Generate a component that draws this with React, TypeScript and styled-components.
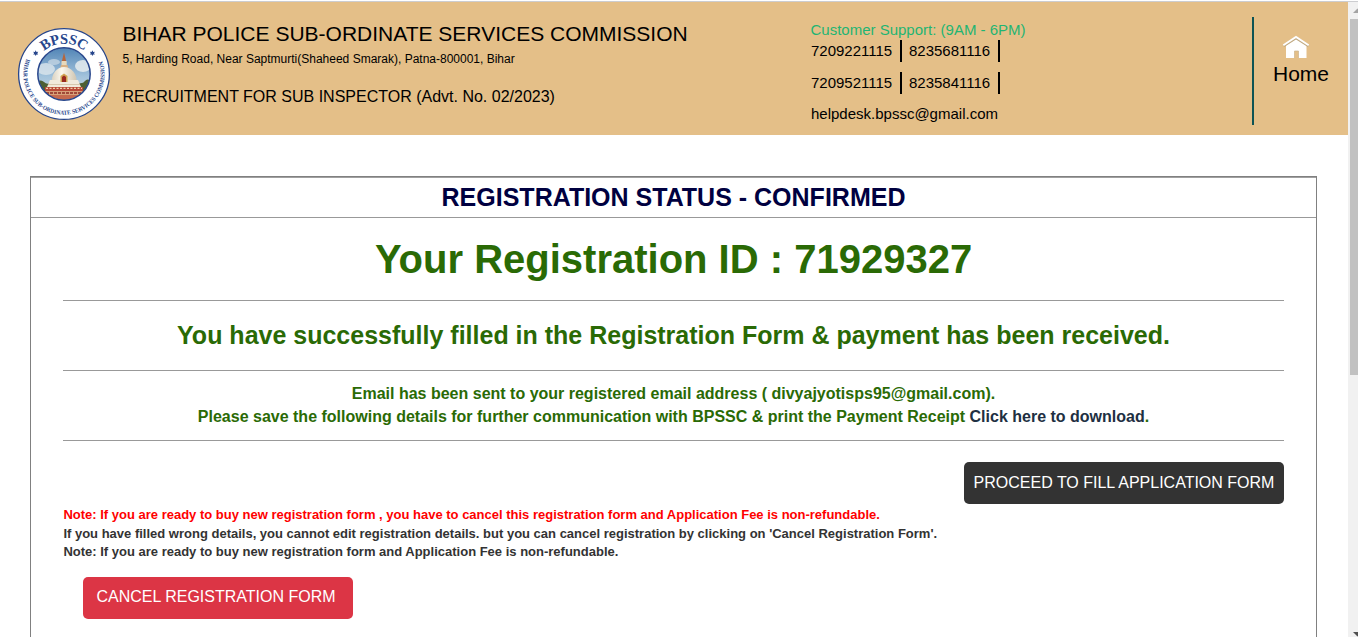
import React from 'react';
import styled, { createGlobalStyle } from 'styled-components';

const GlobalStyle = createGlobalStyle`
  * { box-sizing: border-box; }
  body {
    margin: 0;
    overflow: hidden;
    background: #fff;
    font-family: "Liberation Sans", Arial, sans-serif;
  }
`;

const Window = styled.div`
  display: flex;
  width: 1358px;
  height: 637px;
  overflow: hidden;
`;

const TopEdge = styled.div`
  height: 2px;
  flex: none;
  border-bottom: 1px solid #cccdd0;
  background: #fff;
`;

const Shell = styled.div`
  display: flex;
  flex-direction: column;
  width: 1358px;
  height: 637px;
  overflow: hidden;
`;

const Page = styled.div`
  width: 1348px;
  flex: none;
`;

const Header = styled.header`
  display: flex;
  height: 133px;
  background: #e4bf88;
  color: #000;
`;

const LogoBox = styled.div`
  width: 122.5px;
  padding: 25px 0 0 17px;
`;

const TitleBlock = styled.div`
  width: 688px;
  padding-top: 20px;
`;

const Line = styled.div<{ $size: number; $height: number; $gap?: number }>`
  font-size: ${p => p.$size}px;
  line-height: ${p => p.$height}px;
  margin-top: ${p => p.$gap ?? 0}px;
  white-space: nowrap;
`;

const Support = styled.div`
  width: 441.5px;
  padding-top: 19px;
`;

const SupportHeading = styled(Line)`
  color: #1fb573;
`;

const PhoneRow = styled.div<{ $gap: number }>`
  display: flex;
  gap: 7px;
  margin-top: ${p => p.$gap}px;
  padding-left: 0.5px;
`;

const Phone = styled.span`
  width: 91px;
  height: 22px;
  padding-top: 2px;
  border-right: 2px solid #000;
  font-size: 15px;
  line-height: 17px;
`;

const Email = styled(Line)`
  padding-left: 0.5px;
`;

const HomeLink = styled.a`
  display: flex;
  flex-direction: column;
  align-items: center;
  width: 96px;
  height: 108px;
  margin-top: 15px;
  padding-top: 18px;
  border-left: 2px solid #0d5354;
  font-size: 21px;
  line-height: 23px;

  svg { display: block; margin: 0 10px 4px 0; }
`;

const Panel = styled.main`
  width: 1287px;
  height: 480px;
  margin: 41px 0 0 30px;
  border: 1px solid #808080;
`;

const PanelTitle = styled.h1`
  height: 41px;
  margin: 0;
  padding-top: 5px;
  border-top: 1px solid #a0a0a0;
  border-bottom: 1px solid #999;
  color: #000040;
  font-size: 25px;
  line-height: 29px;
  text-align: center;
`;

const PanelBody = styled.div`
  padding: 0 32px;
`;

const Section = styled.section<{ $height: number; $top: number; $size: number; $line: number }>`
  height: ${p => p.$height}px;
  padding-top: ${p => p.$top}px;
  border-bottom: 1px solid #999;
  color: #2a6a05;
  font-size: ${p => p.$size}px;
  font-weight: 700;
  line-height: ${p => p.$line}px;
  text-align: center;
  white-space: nowrap;
`;

const DownloadLink = styled.a`
  color: #212f42;
`;

const Actions = styled.div`
  display: flex;
  justify-content: flex-end;
  padding-top: 21px;
`;

const Button = styled.button<{ $danger?: boolean }>`
  display: block;
  width: ${p => (p.$danger ? 270 : 320)}px;
  height: 42px;
  margin: ${p => (p.$danger ? '17px 0 0 20px' : '0')};
  padding: ${p => (p.$danger ? '0 4px 3px 0' : '0 0 1px')};
  border: 0;
  border-radius: 5px;
  background: ${p => (p.$danger ? '#dc3545' : '#333')};
  color: #fff;
  font: 16px/18px "Liberation Sans", Arial, sans-serif;
  text-align: center;
  white-space: nowrap;
`;

const Notes = styled.div`
  padding: 3px 0 0 0.4px;
  color: #333;
  font-size: 13px;
  font-weight: 700;
  white-space: nowrap;
`;

const Note = styled.p<{ $alert?: boolean; $height?: number }>`
  margin: 0;
  color: ${p => (p.$alert ? '#f00' : 'inherit')};
  line-height: 15px;
  height: ${p => p.$height ?? 18}px;
`;

const NoteList = styled.div`
  padding-top: 1px;
`;

const Scrollbar = styled.div`
  display: flex;
  flex-direction: column;
  flex: none;
  width: 10px;
  height: 635px;
  background: #f1f1f1;
  overflow: hidden;

  svg { display: block; flex: none; }
`;

const Thumb = styled.div`
  width: 8px;
  height: 356px;
  margin: 0 0 auto 2px;
  background: #c1c1c1;
`;

const Emblem = () => (
  <svg width="94" height="94" viewBox="17 27 94 94" style={{ display: 'block' }}>
    <defs>
      <clipPath id="scene"><circle cx="64" cy="74" r="26" /></clipPath>
      <linearGradient id="sky" x1="0" y1="0" x2="0" y2="1">
        <stop offset="0" stopColor="#4f83b5" />
        <stop offset="0.55" stopColor="#a3c3dc" />
        <stop offset="1" stopColor="#d5dfe4" />
      </linearGradient>
      <linearGradient id="dome" x1="0" y1="0" x2="1" y2="0">
        <stop offset="0" stopColor="#d9d1c0" />
        <stop offset="0.4" stopColor="#fbf8ee" />
        <stop offset="1" stopColor="#cfc4b0" />
      </linearGradient>
      <path id="topArc" d="M33.5 74 A30.5 30.5 0 0 1 94.5 74" />
      <path id="lowArc" d="M26.4 58.8 A40.6 40.6 0 1 0 101.6 58.8" />
    </defs>
    <circle cx="64" cy="74" r="45.4" fill="#fff" stroke="#27468c" strokeWidth="1.3" />
    <g clipPath="url(#scene)">
      <rect x="37" y="47" width="54" height="54" fill="url(#sky)" />
      <ellipse cx="46" cy="69" rx="9" ry="6" fill="#dce6ec" opacity="0.8" />
      <ellipse cx="54" cy="62" rx="6" ry="3" fill="#c3d5e2" opacity="0.8" />
      <ellipse cx="83" cy="66" rx="8" ry="6" fill="#e6ecef" opacity="0.85" />
      <path d="M37 82q4-3 7 0t6 1v9H37zM91 81q-4-3-6 0t-7 2v9h13z" fill="#4d5f34" />
      <path d="M64 52.5l1 4 1.3 5.5h-4.6l1.3-5.5z" fill="#b5663c" />
      <path d="M61.5 61h5.2v4.5h-5.2z" fill="#e8d9bb" />
      <path d="M61 65h6.5l.8 3h-8z" fill="#d9b184" />
      <path d="M52 84C50.500 74 57 67 64 67S78 74 76.500 84z" fill="url(#dome)" />
      <path d="M50 80h28l3 7H47z" fill="#f1eadb" />
      <path d="M48 84.500h32" stroke="#cdb999" strokeWidth="0.700" />
      <path d="M60.500 82v-6l3.500-2.500 3.500 2.500v6z" fill="#d1a451" />
      <path d="M62 82v-5l2-1.500 2 1.500v5z" fill="#9a2a20" />
      <path d="M45 87h38v4H45z" fill="#b94a38" />
      <path d="M46 88.300h36" stroke="#efd0a8" strokeWidth="1.200" strokeDasharray="2 1.500" />
      <path d="M41 91h46v4H41z" fill="#d8a078" />
      <path d="M42 93h44" stroke="#8d2e25" strokeWidth="1.400" strokeDasharray="3 1" />
      <path d="M41 95h46v6H41z" fill="#c46a4e" />
    </g>
    <circle cx="64" cy="74" r="26.200" fill="none" stroke="#27468c" strokeWidth="1.500" />
    <g fill="#27468c" fontFamily="Liberation Serif, serif" fontWeight="700">
      <text fontSize="14.500" letterSpacing="-0.300" textAnchor="middle">
        <textPath href="#topArc" startOffset="50%">BPSSC</textPath>
      </text>
      <text fontSize="6" textLength="156" lengthAdjust="spacingAndGlyphs">
        <textPath href="#lowArc" textLength="156" lengthAdjust="spacingAndGlyphs">BIHAR POLICE SUB-ORDINATE SERVICES COMMISSION</textPath>
      </text>
    </g>
    {[35.7, 92.4].map(x => (
      <path key={x} transform={`translate(${x} 53.200)`} fill="#27468c"
        d="M0-2.900L.8-1.300 2.500-1.400 1.600 0 2.500 1.400.8 1.300 0 2.900-.8 1.300-2.500 1.400-1.600 0-2.500-1.400-.8-1.300z" />
    ))}
  </svg>
);

const House = () => (
  <svg width="28" height="23" viewBox="0 0 28 23">
    <path d="M4 10.500L14 4l10.500 6.500V23H16.500v-7h-4v7H4z" fill="#fff" />
    <path d="M16.500 23v-7h-4v7" fill="none" stroke="#cbb48e" strokeWidth="0.700" />
    <path d="M1.500 11L14 2.900 26.500 11" fill="none" stroke="#c0aa84" strokeWidth="2.600" />
    <path d="M1.300 10.200L14 2l12.700 8.200" fill="none" stroke="#fff" strokeWidth="1.900" />
  </svg>
);

export default function App() {
  return (
    <Shell>
      <GlobalStyle />
      <TopEdge />
      <Window>
        <Page>
          <Header>
            <LogoBox><Emblem /></LogoBox>
            <TitleBlock>
              <Line $size={21} $height={23}>BIHAR POLICE SUB-ORDINATE SERVICES COMMISSION</Line>
              <Line $size={12} $height={14} $gap={7}>5, Harding Road, Near Saptmurti(Shaheed Smarak), Patna-800001, Bihar</Line>
              <Line $size={16} $height={17} $gap={22}>RECRUITMENT FOR SUB INSPECTOR (Advt. No. 02/2023)</Line>
            </TitleBlock>
            <Support>
              <SupportHeading $size={15} $height={17}>Customer Support: (9AM - 6PM)</SupportHeading>
              <PhoneRow $gap={2}><Phone>7209221115</Phone><Phone>8235681116</Phone></PhoneRow>
              <PhoneRow $gap={10}><Phone>7209521115</Phone><Phone>8235841116</Phone></PhoneRow>
              <Email $size={15} $height={17} $gap={11}>helpdesk.bpssc@gmail.com</Email>
            </Support>
            <HomeLink><House />Home</HomeLink>
          </Header>
          <Panel>
            <PanelTitle>REGISTRATION STATUS - CONFIRMED</PanelTitle>
            <PanelBody>
              <Section $height={83} $top={18} $size={40} $line={46}>Your Registration ID : 71929327</Section>
              <Section $height={70} $top={20} $size={25} $line={29}>
                You have successfully filled in the Registration Form &amp; payment has been received.
              </Section>
              <Section $height={70} $top={11} $size={16} $line={23}>
                Email has been sent to your registered email address ( divyajyotisps95@gmail.com).<br />
                Please save the following details for further communication with BPSSC &amp; print the Payment Receipt{' '}
                <DownloadLink>Click here to download</DownloadLink>.
              </Section>
              <Actions><Button>PROCEED TO FILL APPLICATION FORM</Button></Actions>
              <Notes>
                <Note $alert>Note: If you are ready to buy new registration form , you have to cancel this registration form and Application Fee is non-refundable.</Note>
                <NoteList>
                  <Note>If you have filled wrong details, you cannot edit registration details. but you can cancel registration by clicking on 'Cancel Registration Form'.</Note>
                  <Note $height={16}>Note: If you are ready to buy new registration form and Application Fee is non-refundable.</Note>
                </NoteList>
              </Notes>
              <Button $danger>CANCEL REGISTRATION FORM</Button>
            </PanelBody>
          </Panel>
        </Page>
        <Scrollbar>
          <svg width="17" height="17" viewBox="0 0 17 17"><path d="M5 11l4.500-4.500L14 11z" fill="#a3a3a3" /></svg>
          <Thumb />
          <svg width="17" height="5" viewBox="0 0 17 5"><path d="M5 0h9L9.500 4.500z" fill="#505050" /></svg>
        </Scrollbar>
      </Window>
    </Shell>
  );
}
